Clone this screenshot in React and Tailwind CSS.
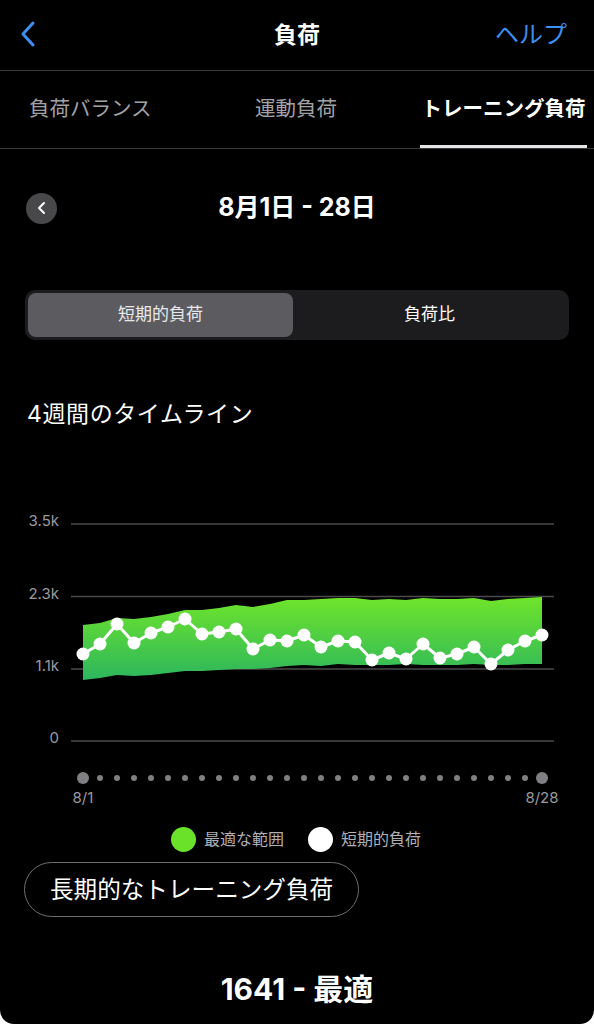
// Training load screen - 4 week timeline
const FONT = { fontFamily: "Inter, 'Noto Sans CJK JP', sans-serif" };

const top = [124, 122, 117, 118, 116, 113, 109, 109, 107, 104, 106, 103, 99, 99, 98, 97, 97, 99, 98, 99, 97, 98, 98, 97, 100, 98, 97, 96];
const bottom = [179, 177, 174, 175, 174, 172, 170, 170, 169, 168, 168, 167, 165, 164, 165, 163, 164, 164, 164, 163, 164, 164, 164, 163, 164, 164, 163, 163];
const load = [153, 143, 123, 142, 132, 126, 118, 133, 131, 128, 148, 139, 140, 134, 146, 140, 141, 159, 152, 158, 143, 157, 153, 146, 163, 149, 140, 134];
const xs = load.map((_, i) => 83 + i * 17);

function Chart() {
  const band =
    top.map((y, i) => `${xs[i]},${y}`).join(' ') +
    ' ' +
    bottom.map((y, i) => `${xs[i]},${y}`).reverse().join(' ');
  const line = load.map((y, i) => `${xs[i]},${y}`).join(' ');
  const grid = [
    { y: 23, label: '3.5k' },
    { y: 95.5, label: '2.3k' },
    { y: 168, label: '1.1k' },
    { y: 240, label: '0' },
  ];

  return (
    <svg width="594" height="310" viewBox="0 0 594 310" className="block">
      <defs>
        <linearGradient id="band" x1="0" y1="96" x2="0" y2="179" gradientUnits="userSpaceOnUse">
          <stop offset="0" stopColor="#6fe52a" />
          <stop offset="1" stopColor="#2db65e" />
        </linearGradient>
      </defs>
      {grid.map((g) => (
        <g key={g.label}>
          <line x1="71" x2="554" y1={g.y} y2={g.y} stroke="#4a4a4c" strokeWidth="1.5" />
          <text x="59" y={g.y - 2} textAnchor="end" dominantBaseline="middle" fill="#9a9a9e" fontSize="15" style={FONT}>
            {g.label}
          </text>
        </g>
      ))}
      <polygon points={band} fill="url(#band)" />
      <polyline points={line} fill="none" stroke="#fff" strokeWidth="3" strokeLinejoin="round" />
      {xs.map((x, i) => (
        <circle key={i} cx={x} cy={load[i]} r="6.5" fill="#fff" />
      ))}
      {xs.map((x, i) => (
        <circle
          key={'d' + i}
          cx={x}
          cy="277"
          r={i === 0 || i === xs.length - 1 ? 6 : 3}
          fill="#808084"
        />
      ))}
      <text x="83" y="298" textAnchor="middle" dominantBaseline="middle" fill="#9a9a9e" fontSize="15" style={FONT}>
        8/1
      </text>
      <text x="542" y="298" textAnchor="middle" dominantBaseline="middle" fill="#9a9a9e" fontSize="15" style={FONT}>
        8/28
      </text>
    </svg>
  );
}

export default function App() {
  return (
    <div className="bg-white w-[594px] h-[1024px]" style={FONT}>
      <div className="bg-black w-full h-full rounded-b-[14px] overflow-hidden text-white">
        {/* nav bar */}
        <div className="h-[70px] flex items-center justify-between pl-[18px] pr-[27px] relative">
          <svg width="22" height="28" viewBox="0 0 22 28" className="mb-[2px]">
            <path d="M15 3 L5 14 L15 25" fill="none" stroke="#3d8ff2" strokeWidth="3" strokeLinecap="round" strokeLinejoin="round" />
          </svg>
          <div className="absolute left-1/2 -translate-x-1/2 text-[23px] font-bold">負荷</div>
          <div className="text-[24px] text-[#3d8ff2]">ヘルプ</div>
        </div>
        <div className="h-px bg-[#3a3a3c]" />

        {/* tabs */}
        <div className="flex h-[78px] text-[20.5px] border-b border-[#3a3a3c]">
          <div className="w-[200px] pl-[29px] flex items-center text-[#a2a2a6]">負荷バランス</div>
          <div className="w-[192px] flex items-center justify-center text-[#a2a2a6]">運動負荷</div>
          <div className="ml-auto mr-[7px] w-[167px] flex items-center justify-center font-bold border-b-[3px] border-[#e5e5e7] pt-[3px] whitespace-nowrap">
            トレーニング負荷
          </div>
        </div>

        {/* date row */}
        <div className="h-[118px] flex items-center px-[26px] relative">
          <div className="w-[31px] h-[31px] rounded-full bg-[#48484b] flex items-center justify-center">
            <svg width="12" height="14" viewBox="0 0 12 14">
              <path d="M8 2 L3 7 L8 12" fill="none" stroke="#fff" strokeWidth="2" strokeLinecap="round" strokeLinejoin="round" />
            </svg>
          </div>
          <div className="absolute left-1/2 -translate-x-1/2 text-[25px] font-bold whitespace-nowrap">8月1日 - 28日</div>
        </div>

        {/* segmented control */}
        <div className="mt-[23px] mx-[25px] h-[50px] rounded-[10px] bg-[#1c1c1e] p-[3px] flex text-[17px]">
          <div className="w-[265px] rounded-[8px] bg-[#5c5c60] flex items-center justify-center text-[#e8e8ea]">短期的負荷</div>
          <div className="flex-1 flex items-center justify-center">負荷比</div>
        </div>

        {/* timeline title */}
        <div className="mt-[59px] pl-[27px] text-[23px] tracking-[0.6px] leading-[30px]">4週間のタイムライン</div>

        <div className="mt-[72px]">
          <Chart />
        </div>

        {/* legend */}
        <div className="h-[40px] flex items-center justify-center gap-[12px] text-[16px] text-[#b0b0b4] mt-[8px] pr-[2px]">
          <div className="flex items-center gap-[8px]">
            <div className="w-[25px] h-[25px] rounded-full bg-[#6be22a]" />
            <span>最適な範囲</span>
          </div>
          <div className="flex items-center gap-[8px] ml-[12px]">
            <div className="w-[25px] h-[25px] rounded-full bg-white" />
            <span>短期的負荷</span>
          </div>
        </div>

        {/* long-term button */}
        <div className="pl-[24px] mt-[3px]">
          <div className="inline-flex items-center h-[55px] px-[25px] rounded-full border border-[#6e6e72] text-[23.6px]">
            長期的なトレーニング負荷
          </div>
        </div>

        <div className="mt-[50px] text-center text-[30px] font-bold">1641 - 最適</div>
      </div>
    </div>
  );
}
